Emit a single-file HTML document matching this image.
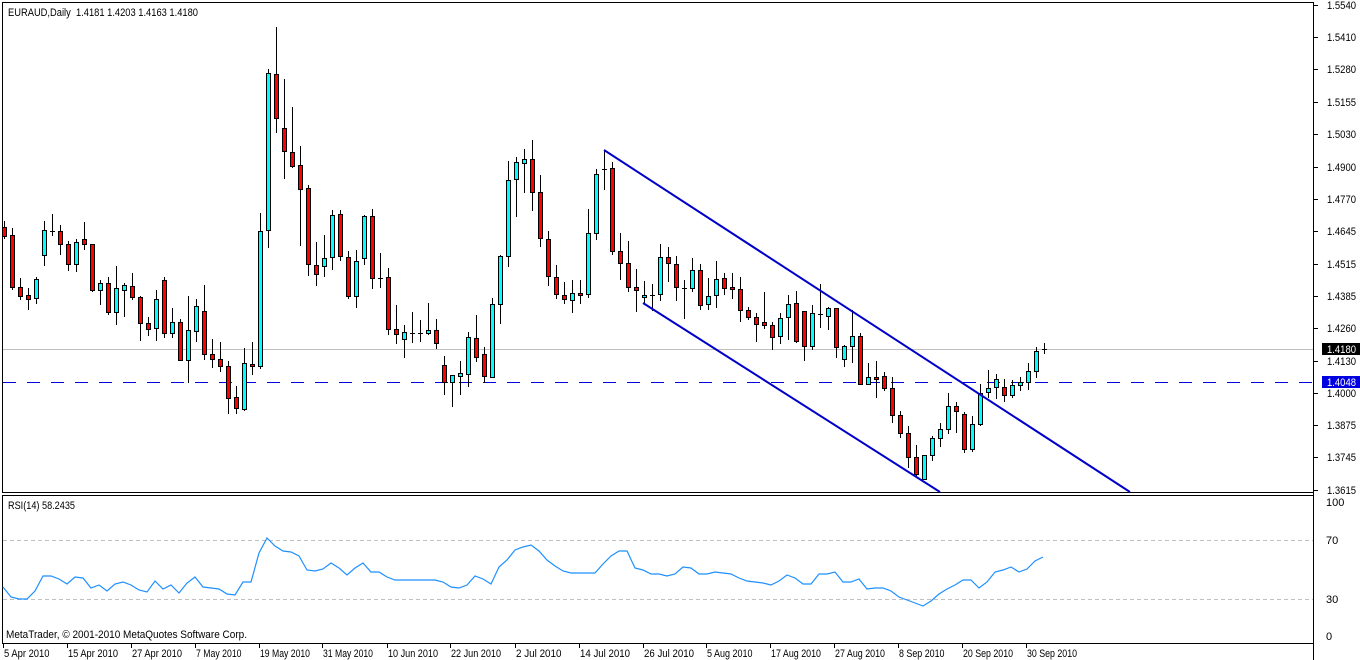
<!DOCTYPE html>
<html><head><meta charset="utf-8"><style>
html,body{margin:0;padding:0;background:#fff;}
svg{display:block;font-family:"Liberation Sans",sans-serif;font-size:11px;}
</style></head><body>
<svg id="s" width="1360" height="660" xmlns="http://www.w3.org/2000/svg" shape-rendering="crispEdges">
<rect width="1360" height="660" fill="#fff"/>
<line x1="2.5" y1="2" x2="2.5" y2="493" stroke="#000"/>
<line x1="2" y1="2.5" x2="1313" y2="2.5" stroke="#000"/>
<line x1="1313.5" y1="2" x2="1313.5" y2="660" stroke="#000"/>
<line x1="2" y1="492.5" x2="1314" y2="492.5" stroke="#000"/>
<line x1="2" y1="495.5" x2="1314" y2="495.5" stroke="#000"/>
<line x1="2.5" y1="495" x2="2.5" y2="643" stroke="#000"/>
<line x1="2" y1="643.5" x2="1314" y2="643.5" stroke="#000"/>
<line x1="3" y1="349.5" x2="1313" y2="349.5" stroke="#c0c0c0"/>
<line x1="3" y1="540.5" x2="1313" y2="540.5" stroke="#c0c0c0" stroke-dasharray="4,3"/>
<line x1="3" y1="599.5" x2="1313" y2="599.5" stroke="#c0c0c0" stroke-dasharray="4,3"/>
<line x1="3" y1="382.5" x2="1313" y2="382.5" stroke="#0000e0" stroke-dasharray="13,11"/>
<g id="c"></g>
<g stroke="#0000c8" stroke-width="2" shape-rendering="auto">
<line x1="604" y1="150" x2="1130" y2="492"/>
<line x1="643" y1="303" x2="940" y2="492"/>
</g>
<polyline id="rsi" fill="none" stroke="#1e90ff" stroke-width="1.2" shape-rendering="auto"/>
<text x="8" y="16" fill="#000" textLength="190" lengthAdjust="spacingAndGlyphs" xml:space="preserve">EURAUD,Daily  1.4181 1.4203 1.4163 1.4180</text>
<text x="8" y="509" fill="#000" textLength="67" lengthAdjust="spacingAndGlyphs">RSI(14) 58.2435</text>
<text x="6" y="638" fill="#000" textLength="241" lengthAdjust="spacingAndGlyphs">MetaTrader, © 2001-2010 MetaQuotes Software Corp.</text>
<g id="ax"></g>
<rect x="1322" y="343" width="38" height="12" fill="#000"/>
<text x="1327" y="353" fill="#fff" textLength="29" lengthAdjust="spacingAndGlyphs">1.4180</text>
<rect x="1322" y="376" width="38" height="12" fill="#0000e0"/>
<text x="1327" y="386" fill="#fff" textLength="29" lengthAdjust="spacingAndGlyphs">1.4048</text>
</svg>
<script>
var NS="http://www.w3.org/2000/svg";
function el(p,t,a,txt){var e=document.createElementNS(NS,t);for(var k in a)e.setAttribute(k,a[k]);if(txt)e.textContent=txt;p.appendChild(e);return e;}
var D=[
['d',227,236,221,238],['d',235,287,228,289],['d',287,296,278,299],['d',295,299,288,309],['u',279,298,277,303],
['u',230,255,221,265],['n',231,231,214,235],['d',231,244,225,254],['d',244,264,241,270],['u',242,264,239,271],
['d',239,244,222,249],['d',244,290,244,291],['u',283,290,280,304],['d',283,312,277,314],['u',288,312,266,324],
['u',285,290,283,316],['d',286,297,273,299],['d',297,323,296,340],['d',323,329,317,335],['u',299,328,290,340],
['d',280,333,277,337],['u',322,333,308,337],['d',322,360,319,360],['u',330,360,296,382],['u',306,331,299,341],
['d',311,354,285,359],['d',354,359,339,367],['d',359,366,342,371],['d',366,398,361,413],['d',397,408,386,413],
['u',363,409,348,410],['d',364,366,342,374],['u',231,366,213,368],['u',73,230,69,247],['d',74,118,27,132],
['d',128,151,79,178],['d',152,166,107,167],['d',165,189,146,245],['d',188,264,185,275],['d',265,274,242,285],
['u',258,266,235,276],['u',215,257,210,269],['d',214,256,210,260],['d',257,296,251,298],['u',261,296,250,307],
['u',216,258,215,264],['d',216,278,209,288],['n',278,278,253,287],['d',277,329,268,334],['d',329,334,305,343],
['u',332,339,325,357],['n',333,333,312,342],['n',333,333,320,341],['u',330,333,303,334],['d',330,343,319,348],
['d',365,382,356,394],['u',375,382,375,406],['u',373,376,361,394],['u',337,374,332,386],['d',338,357,315,361],
['d',354,376,347,382],['u',304,377,298,377],['u',256,304,255,323],['u',180,256,161,266],['u',162,179,157,216],
['u',159,163,149,192],['d',159,192,140,210],['d',192,238,175,246],['d',239,276,231,285],['d',277,294,265,298],
['d',295,299,282,303],['u',293,300,280,312],['d',293,295,280,303],['u',233,294,209,297],['u',174,233,169,239],
['n',169,169,150,189],['d',168,251,162,254],['d',251,263,233,279],['d',263,287,241,291],['d',287,290,269,311],
['u',295,297,281,303],['n',295,295,284,310],['u',257,294,244,300],['d',257,263,247,281],['d',264,287,256,300],
['n',288,288,280,318],['u',270,288,258,291],['d',270,305,264,309],['u',296,304,278,309],['u',279,295,261,307],
['d',278,288,273,294],['d',287,289,273,298],['d',289,310,277,321],['d',310,317,307,319],['d',317,324,313,341],
['d',322,325,292,328],['d',325,337,322,349],['u',318,336,313,343],['u',304,317,295,339],['d',303,341,291,342],
['d',311,346,311,360],['u',313,346,305,349],['n',314,314,284,327],['u',308,316,307,329],['d',308,347,308,357],
['u',346,359,345,366],['u',336,346,310,362],['d',336,384,333,384],['u',377,384,363,384],['d',377,379,361,397],
['d',376,388,372,390],['d',388,415,377,422],['d',415,433,411,437],['d',433,457,426,467],['d',457,474,445,475],
['u',455,479,455,479],['u',438,455,436,460],['u',429,438,423,446],['u',406,429,393,433],['d',406,411,402,432],
['d',414,449,412,452],['u',424,449,416,451],['u',393,424,384,425],['u',388,392,370,397],['u',379,387,374,398],
['d',387,395,379,401],['u',385,395,380,397],['u',382,385,377,390],['u',371,382,363,389],['u',351,371,347,377],
['n',349,349,343,353]];
var g=document.getElementById('c');
D.forEach(function(d,i){var cx=Math.round(3.5+8*i);
 el(g,'line',{x1:cx+.5,y1:d[3],x2:cx+.5,y2:d[4]+1,stroke:'#000'});
 if(d[0]=='n'){el(g,'line',{x1:cx-2,y1:d[1]+.5,x2:cx+3,y2:d[1]+.5,stroke:'#000'});}
 else el(g,'rect',{x:cx-1.5,y:d[1]+.5,width:4,height:Math.max(1,d[2]-d[1]),fill:d[0]=='u'?'#00ffff':'#ff0000',stroke:'#000'});
});
var R=[[3,587],[11,597],[19,599],[27,599],[35,591],[43,576],[51,576],[59,579],[67,584],[75,577],[83,578],[91,588],[99,585],[107,591],[115,584],[123,582],[131,585],[139,590],[147,592],[155,581],[163,589],[171,585],[179,593],[187,583],[195,577],[203,587],[211,588],[219,589],[227,594],[235,595],[243,582],[251,582],[259,553],[267,538],[275,546],[283,551],[291,552],[299,556],[307,570],[315,571],[323,569],[331,563],[339,568],[347,575],[355,568],[363,563],[371,572],[379,572],[387,577],[395,580],[403,580],[411,580],[419,580],[427,580],[435,580],[443,582],[451,587],[459,588],[467,585],[475,576],[483,579],[491,584],[499,567],[507,560],[515,550],[523,547],[531,545],[539,551],[547,560],[555,566],[563,571],[571,573],[579,573],[587,573],[595,573],[603,564],[611,556],[619,551],[627,551],[635,568],[643,570],[651,574],[659,574],[667,576],[675,574],[683,567],[691,568],[699,574],[707,574],[715,572],[723,573],[731,574],[739,578],[747,581],[755,582],[763,583],[771,585],[779,581],[787,575],[795,578],[803,584],[811,584],[819,574],[827,574],[835,572],[843,582],[851,582],[859,579],[867,589],[875,588],[883,588],[891,591],[899,597],[907,600],[915,603],[923,606],[931,601],[939,594],[947,589],[955,585],[963,580],[971,580],[979,588],[987,582],[995,572],[1003,570],[1011,567],[1019,572],[1027,569],[1035,561],[1043,557]];
document.getElementById('rsi').setAttribute('points',R.map(function(p){return p.join(',')}).join(' '));
var ax=document.getElementById('ax');
[['1.5540',5],['1.5410',37],['1.5280',69],['1.5155',102],['1.5030',134],['1.4900',167],['1.4770',199],['1.4645',231],['1.4515',264],['1.4385',296],['1.4260',328],['1.4130',361],['1.4000',393],['1.3875',425],['1.3745',457],['1.3615',490]].forEach(function(a){
 el(ax,'line',{x1:1314,y1:a[1]+.5,x2:1318,y2:a[1]+.5,stroke:'#000'});
 el(ax,'text',{x:1327,y:a[1]+4,fill:'#000',textLength:29,lengthAdjust:'spacingAndGlyphs'},a[0]);});
[['100',506],['70',544],['30',603],['0',640]].forEach(function(a){el(ax,'text',{x:1326,y:a[1],fill:'#000'},a[0]);});
[['5 Apr 2010',3],['15 Apr 2010',67],['27 Apr 2010',131],['7 May 2010',195],['19 May 2010',259],['31 May 2010',322],['10 Jun 2010',387],['22 Jun 2010',450],['2 Jul 2010',515],['14 Jul 2010',579],['26 Jul 2010',643],['5 Aug 2010',706],['17 Aug 2010',770],['27 Aug 2010',834],['8 Sep 2010',898],['20 Sep 2010',962],['30 Sep 2010',1026]].forEach(function(a){
 el(ax,'line',{x1:a[1]+.5,y1:644,x2:a[1]+.5,y2:648,stroke:'#000'});
 el(ax,'text',{x:a[1]+1,y:657,fill:'#000',textLength:(a[0].length*4.55).toFixed(1),lengthAdjust:'spacingAndGlyphs'},a[0]);});
</script>
</body></html>
